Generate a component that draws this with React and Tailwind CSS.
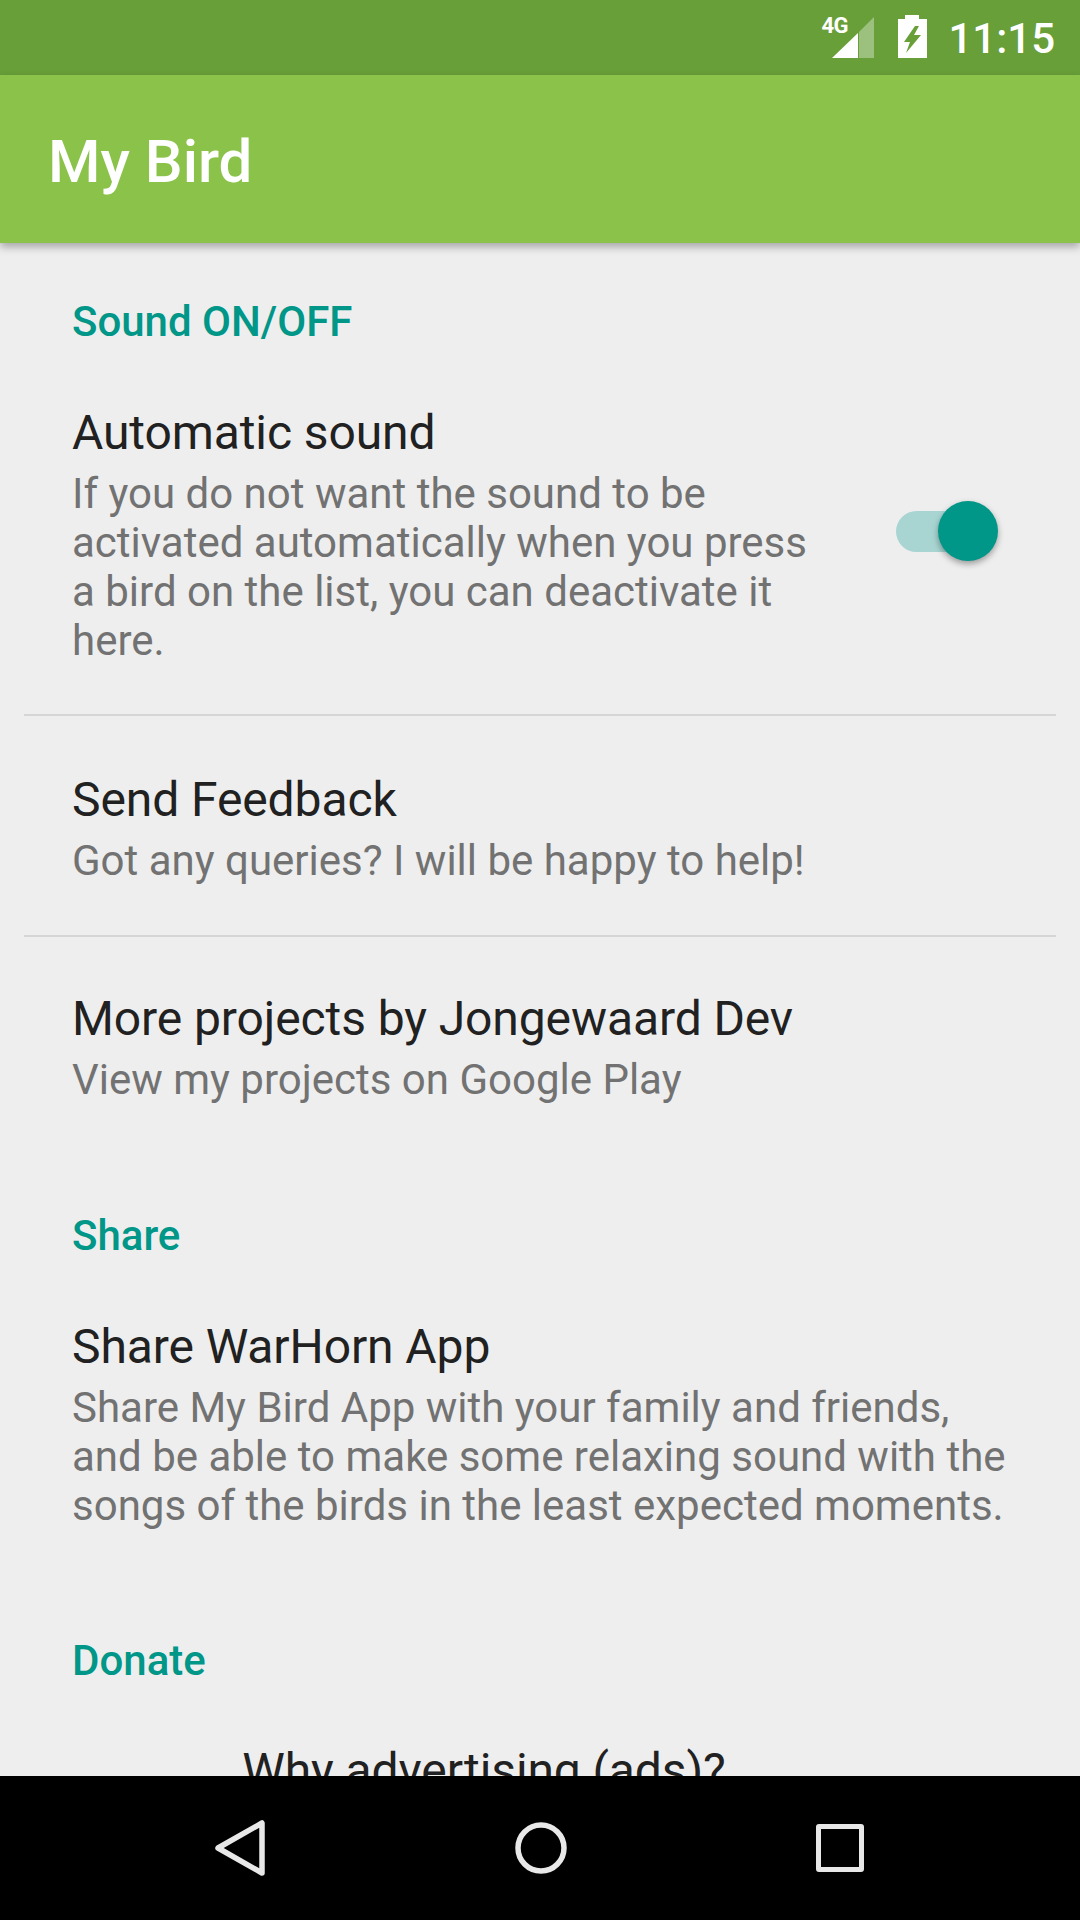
import React from 'react';

const Category = ({ children, className = '' }) => (
  <h2 className={`pl-[72px] text-[42px] leading-[50px] font-medium text-[#009688] ${className}`}>{children}</h2>
);

const Pref = ({ title, children, className = '' }) => (
  <div className={`pl-[72px] pr-[72px] ${className}`}>
    <div className="text-[48px] leading-[72px] tracking-[-0.1px] text-[#212121]">{title}</div>
    <div className="text-[42px] leading-[49px] text-[#727272]">{children}</div>
  </div>
);

const StatusBar = () => (
  <div className="h-[75px] bg-[#689f38] flex justify-end shrink-0">
    <div className="relative w-[53px] h-[41px] mt-[17px] mr-[24px]">
      <span className="absolute left-0 top-0 text-[22px] leading-[18px] font-bold text-white tracking-[-0.5px]">4G</span>
      <svg className="absolute left-[11px] top-0" width="42" height="41" viewBox="0 0 42 41">
        <path d="M42 0V41H27V15Z" fill="#fff" fillOpacity="0.35" />
        <path d="M26 16V41H0Z" fill="#fff" />
      </svg>
    </div>
    <svg className="mt-[15px] mr-[21px]" width="29" height="43" viewBox="0 0 29 43">
      <path fillRule="evenodd" d="M7 0H21V4H29V43H0V4H7ZM17 11 6 27H12L8 38 23 20H16L21 11Z" fill="#fff" />
    </svg>
    <span className="mt-[18px] mr-[25px] text-[42px] leading-[42px] font-medium text-white">11:15</span>
  </div>
);

const NavBar = () => (
  <div className="h-[144px] bg-black flex items-center justify-between pl-[215px] pr-[216px] shrink-0">
    <svg width="50" height="56" viewBox="0 0 50 56" fill="none">
      <path d="M47 3V53L3 28Z" stroke="#e8e8e8" strokeWidth="5.5" strokeLinejoin="round" />
    </svg>
    <svg width="52" height="52" viewBox="0 0 52 52" fill="none">
      <circle cx="26" cy="26" r="23" stroke="#e8e8e8" strokeWidth="5.5" />
    </svg>
    <div className="w-[48px] h-[48px] border-[5px] border-[#e8e8e8] rounded-[3px]" />
  </div>
);

export default function App() {
  return (
    <div className="w-[1080px] h-[1920px] flex flex-col bg-[#eeeeee] overflow-hidden" style={{ fontFamily: 'Roboto, sans-serif' }}>
      <StatusBar />
      <header className="relative z-10 h-[168px] shrink-0 bg-[#8bc34a] flex items-center pl-[48px] pt-[5px] shadow-[0_4px_8px_rgba(0,0,0,0.3)]">
        <h1 className="text-[60px] font-medium text-white">My Bird</h1>
      </header>

      <main className="flex-1 min-h-0 overflow-hidden pt-[54px]">
        <Category>Sound ON/OFF</Category>
        <div className="flex items-center pt-[50px] pr-[82px] pb-[49px]">
          <Pref title="Automatic sound" className="flex-1 !pr-0">
            If you do not want the sound to be activated automatically when you press a bird on the list, you can deactivate it here.
          </Pref>
          <div className="relative w-[102px] h-[60px] ml-[82px] shrink-0 flex items-center">
            <div className="w-[94px] h-[41px] rounded-full bg-[#a8d5d2]" />
            <div className="absolute right-0 top-0 w-[60px] h-[60px] rounded-full bg-[#009688] shadow-[0_3px_6px_rgba(0,0,0,0.35)]" />
          </div>
        </div>
        <div className="mx-[24px] h-[2px] bg-[#d6d6d6]" />
        <Pref title="Send Feedback" className="pt-[48px] pb-[50px]">Got any queries? I will be happy to help!</Pref>
        <div className="mx-[24px] h-[2px] bg-[#d6d6d6]" />
        <Pref title="More projects by Jongewaard Dev" className="pt-[46px]">View my projects on Google Play</Pref>

        <Category className="mt-[107px]">Share</Category>
        <Pref title="Share WarHorn App" className="pt-[50px] !pr-[60px]">
          Share My Bird App with your family and friends, and be able to make some relaxing sound with the songs of the birds in the least expected moments.
        </Pref>

        <Category className="mt-[106px]">Donate</Category>
        <div className="mt-[55px] text-center text-[48px] leading-[60px] tracking-[-0.1px] text-[#212121] pr-[112px]">Why advertising (ads)?</div>
      </main>

      <NavBar />
    </div>
  );
}
